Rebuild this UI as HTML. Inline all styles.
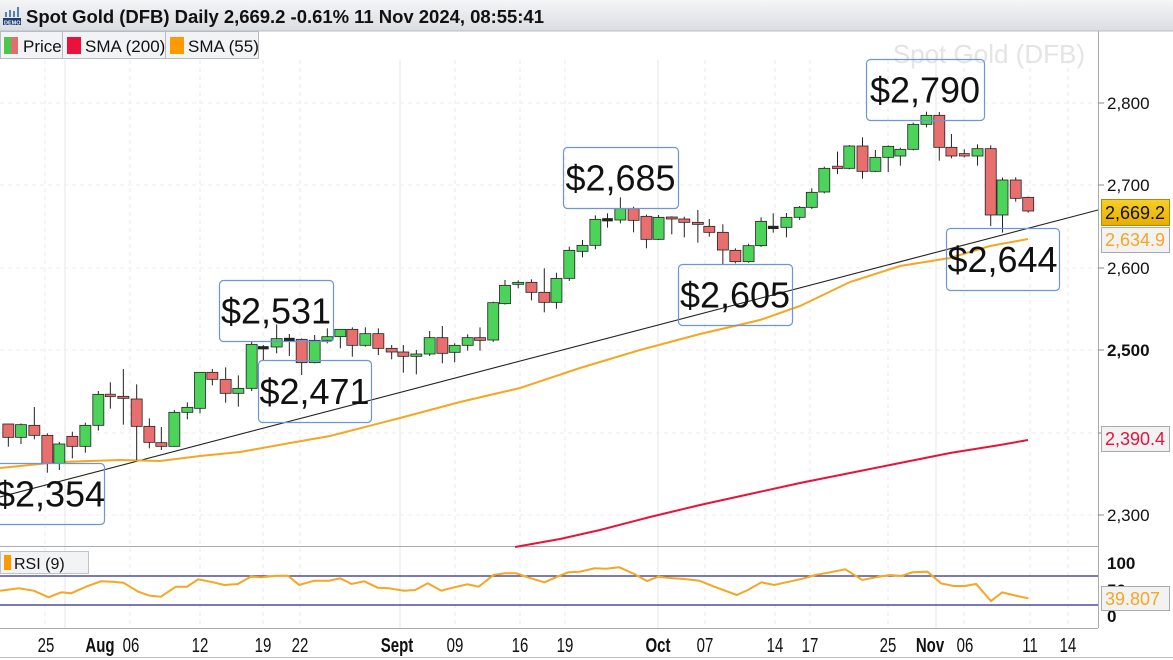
<!DOCTYPE html>
<html><head><meta charset="utf-8"><style>
html,body{margin:0;padding:0;background:#fff;}
body{width:1173px;height:660px;overflow:hidden;position:relative;font-family:"Liberation Sans",Arial,sans-serif;}
</style></head><body>
<svg id="s" width="1173" height="660" xmlns="http://www.w3.org/2000/svg" style="position:absolute;left:0;top:0;font-family:'Liberation Sans',Arial,sans-serif">
<defs><linearGradient id="hg" x1="0" y1="0" x2="0" y2="1"><stop offset="0" stop-color="#f4f5f7"/><stop offset="1" stop-color="#d9dde2"/></linearGradient>
<linearGradient id="gold" x1="0" y1="0" x2="0" y2="1"><stop offset="0" stop-color="#f7cf2a"/><stop offset="1" stop-color="#e6ad00"/></linearGradient></defs>
<rect x="0" y="0" width="1173" height="660" fill="#fff"/>
<g id="grid"></g>
<g id="lines"></g>
<g id="candles"></g>
<g id="ann"></g>
</svg>
<script>
var NS="http://www.w3.org/2000/svg",svg=document.getElementById('s');
function el(p,t,a,txt){var e=document.createElementNS(NS,t);for(var k in a)e.setAttribute(k,a[k]);if(txt!==undefined)e.textContent=txt;p.appendChild(e);return e;}
var grid=document.getElementById('grid'),lines=document.getElementById('lines'),cg=document.getElementById('candles'),ann=document.getElementById('ann');
el(grid,'rect',{x:0,y:548,width:1098,height:80,fill:'#fff'});
[45,130,200,263,300,455,520,565,705,775,810,888,964,1030,1068].forEach(function(x){el(grid,'line',{x1:x,y1:60,x2:x,y2:628,stroke:'#e8e8e8','stroke-dasharray':'4,4'});});
[65,400,658,936].forEach(function(x){el(grid,'line',{x1:x,y1:60,x2:x,y2:628,stroke:'#e6e6e6'});});
[103,185,268,350,433,515].forEach(function(y){el(grid,'line',{x1:0,y1:y,x2:1098,y2:y,stroke:'#ececec','stroke-dasharray':'4,4'});});
el(grid,'rect',{x:0,y:0,width:1173,height:31,fill:'url(#hg)'});
el(grid,'line',{x1:0,y1:31,x2:1173,y2:31,stroke:'#b8bcc2'});
var ic=el(grid,'g',{});
el(ic,'rect',{x:3,y:18,width:18,height:7,fill:'#1d3c6e'});
el(ic,'text',{x:4,y:24.5,'font-size':5.5,fill:'#fff','font-weight':'bold'},'DEMO');
[[5,12,5],[9,10,7],[13,11,6],[17,7,10]].forEach(function(b){el(ic,'rect',{x:b[0],y:b[1],width:2,height:b[2],fill:'#5a7fb8'});});
el(grid,'text',{x:26,y:23,'font-size':18.5,'font-weight':'bold',fill:'#111',textLength:518},'Spot Gold (DFB) Daily 2,669.2 -0.61% 11 Nov 2024, 08:55:41');
el(grid,'rect',{x:0.5,y:31.5,width:258,height:27,fill:'#f2f3f5',stroke:'#b8bcc2'});
el(grid,'line',{x1:62.5,y1:31,x2:62.5,y2:59,stroke:'#b8bcc2'});el(grid,'line',{x1:165.5,y1:31,x2:165.5,y2:59,stroke:'#b8bcc2'});
el(grid,'rect',{x:4,y:37,width:7,height:17,fill:'#47c94a'});el(grid,'rect',{x:11,y:37,width:7,height:17,fill:'#e46d6d'});
el(grid,'text',{x:23,y:52,'font-size':17,fill:'#111'},'Price');
el(grid,'rect',{x:67,y:37,width:14,height:17,fill:'#e8123c'});
el(grid,'text',{x:85,y:52,'font-size':17,fill:'#111'},'SMA (200)');
el(grid,'rect',{x:170,y:37,width:14,height:17,fill:'#ff9900'});
el(grid,'text',{x:188,y:52,'font-size':17,fill:'#111'},'SMA (55)');
el(grid,'text',{x:1085,y:63,'font-size':26,fill:'#e4e4e4','text-anchor':'end'},'Spot Gold (DFB)');
el(grid,'line',{x1:1098.5,y1:31,x2:1098.5,y2:628,stroke:'#a8abb0'});
el(grid,'line',{x1:0,y1:546.5,x2:1098,y2:546.5,stroke:'#a8abb0'});
el(grid,'line',{x1:0,y1:628.5,x2:1098,y2:628.5,stroke:'#a8abb0'});
el(grid,'line',{x1:0,y1:657.5,x2:1173,y2:657.5,stroke:'#c0c0c0'});
[[103,'2,800'],[185,'2,700'],[268,'2,600'],[350,'2,500'],[433,'2,400'],[515,'2,300']].forEach(function(a){el(grid,'line',{x1:1098,y1:a[0],x2:1104,y2:a[0],stroke:'#888'});el(grid,'text',{x:1107,y:a[0]+6,'font-size':17,fill:'#111','font-weight':a[1]=='2,500'?'bold':'normal'},a[1]);});
el(grid,'text',{x:1107,y:569,'font-size':17,fill:'#111','font-weight':'bold'},'100');
el(grid,'text',{x:1107,y:596,'font-size':17,fill:'#111','font-weight':'bold'},'50');
el(grid,'text',{x:1107,y:622,'font-size':17,fill:'#111','font-weight':'bold'},'0');
[[46,'25'],[100,'Aug',1],[131,'06'],[200,'12'],[263,'19'],[300,'22'],[397,'Sept',1],[455,'09'],[520,'16'],[565,'19'],[658,'Oct',1],[705,'07'],[775,'14'],[810,'17'],[888,'25'],[930,'Nov',1],[965,'06'],[1030,'11'],[1068,'14']].forEach(function(a){el(grid,'text',{x:a[0],y:652,'font-size':20,fill:'#111','text-anchor':'middle','font-weight':a[2]?'bold':'normal',transform:'translate('+a[0]+',0) scale(0.75,1) translate('+(-a[0])+',0)'},a[1]);});
el(lines,'line',{x1:0,y1:576,x2:1098,y2:576,stroke:'#2b2b8a','stroke-width':1.2});
el(lines,'line',{x1:0,y1:605,x2:1098,y2:605,stroke:'#2b2b8a','stroke-width':1.2});
var rz=[[0,152],[25,145],[45,152],[65,172],[82,157],[95,160],[115,140],[135,124],[150,125],[165,128],[185,155],[200,167],[215,170],[235,140],[250,140],[265,118],[285,127],[300,135],[318,132],[335,110],[350,112],[370,107],[385,107],[400,135],[420,122],[440,122],[455,115],[470,132],[487,124],[505,143],[520,145],[540,152],[555,150],[572,130],[590,152],[605,143],[625,133],[640,140],[660,105],[675,100],[690,100],[710,115],[728,127],[745,110],[760,97],[775,95],[795,85],[810,86],[828,82],[848,102],[865,123],[880,110],[900,115],[915,117],[935,122],[955,140],[985,165],[1000,150],[1018,127],[1035,135],[1055,125],[1075,115],[1090,105],[1110,97],[1130,88],[1153,120],[1175,110],[1190,105],[1205,108],[1220,97],[1240,95],[1258,130],[1275,138],[1290,138],[1305,132],[1325,183],[1340,157],[1360,168],[1375,175]];
var rp=rz.map(function(p){return (p[0]/1.337).toFixed(1)+','+(p[1]/3+540).toFixed(1);}).join(' ');
el(lines,'polyline',{points:rp,fill:'none',stroke:'#f5a623','stroke-width':2});
el(lines,'rect',{x:0.5,y:551.5,width:88,height:22,fill:'#f2f3f5',stroke:'#c0c4c8'});
el(lines,'rect',{x:4,y:555,width:7,height:15,fill:'#ff9900'});
el(lines,'text',{x:14,y:569,'font-size':16,fill:'#111'},'RSI (9)');
el(lines,'line',{x1:0,y1:497,x2:1098,y2:210,stroke:'#222','stroke-width':1.1});
el(lines,'polyline',{points:'0,468 60,462 120,460 160,461 200,456 240,452 290,443 330,436 400,418 460,402 520,388 580,368 640,350 700,334 760,320 800,306 850,282 900,266 950,258 990,246 1028,239',fill:'none',stroke:'#f5a623','stroke-width':2});
el(lines,'polyline',{points:'515,547 560,539 600,530 650,517 700,505 750,494 800,483 850,473 900,463 950,453 1000,445 1028,440',fill:'none',stroke:'#e8123c','stroke-width':2});
var G='#4cd35a',R='#e96f6f';
function cd(x,t,b,wt,wb,c){el(cg,'line',{x1:x,y1:wt,x2:x,y2:wb,stroke:'#222','stroke-width':1});
 if(b-t<2){el(cg,'rect',{x:x-5,y:t-0.5,width:10,height:2.5,fill:c=='k'?'#222':(c=='g'?G:R),stroke:'#222','stroke-width':0.7});}
 else el(cg,'rect',{x:x-5.5,y:t,width:11,height:b-t,fill:c=='g'?G:R,stroke:'#222','stroke-width':0.8});}
var z4=[[25,432,472,432,500,'r'],[63,434,472,430,492,'g'],[103,436,466,381,478,'r'],[142,466,550,460,578,'r'],[178,492,550,486,570,'g'],[217,469,499,455,535,'r'],[256,436,499,428,518,'g'],[295,343,436,333,452,'g'],[331,344,349,307,386,'r'],[370,349,355,267,434,'r'],[410,357,439,313,540,'r'],[448,439,487,415,505,'r'],[484,488,499,441,510,'r'],[523,397,499,390,500,'g'],[562,382,397,367,418,'g'],[600,277,385,277,400,'g'],[637,277,298,267,316,'r'],[677,298,340,262,368,'r'],[715,325,340,286,380,'g'],[755,193,325,185,333,'g'],[790,201,203,195,240,'k'],[830,176,201,133,220,'g'],[868,176,178,162,228,'k'],[905,178,248,175,285,'r'],[944,181,248,165,250,'g'],[982,170,181,145,190,'g'],[1021,148,170,148,205,'g'],[1057,148,196,142,230,'r'],[1096,161,196,142,200,'g'],[1135,161,205,145,225,'r'],[1175,205,216,195,238,'r'],[1210,216,229,195,278,'r'],[1249,222,229,210,283,'g'],[1289,173,222,153,228,'g'],[1327,173,220,138,250,'r'],[1364,196,217,190,247,'g'],[1403,173,196,163,212,'g'],[1440,173,181,142,212,'r']];
z4.forEach(function(c){cd(c[0]/3,c[1]/3+280,c[2]/3+280,c[3]/3+280,c[4]/3+280,c[5]);});
var z5=[[37,608,720,605,726,'g'],[70,556,611,540,614,'g'],[107,547,553,541,565,'g'],[144,547,577,538,601,'r'],[180,577,607,505,637,'r'],[214,535,607,518,626,'g'],[250,451,535,440,543,'g'],[287,436,454,420,472,'g'],[323,358,436,346,448,'g'],[357,357,359,340,383,'k'],[393,326,360,292,370,'g'],[430,326,361,320,397,'r'],[466,349,418,344,445,'r'],[500,352,418,345,420,'g'],[537,351,357,349,403,'r'],[572,357,367,350,412,'r'],[610,367,373,330,428,'r'],[642,379,397,357,410,'r'],[680,397,450,373,492,'r'],[715,451,485,445,490,'r'],[752,437,485,431,488,'g'],[787,364,437,352,441,'g'],[821,380,382,340,398,'k'],[858,352,382,339,412,'g'],[895,322,352,318,360,'g'],[929,277,322,265,327,'g'],[964,205,276,200,280,'g'],[1001,200,205,155,222,'r'],[1034,138,205,135,208,'g'],[1071,138,214,112,236,'r'],[1107,172,214,150,216,'g'],[1143,139,172,136,216,'g'],[1177,148,168,143,197,'g'],[1213,73,148,68,151,'g'],[1250,46,73,35,82,'g'],[1286,46,142,36,182,'r'],[1320,142,168,102,175,'r'],[1356,162,167,148,172,'r'],[1393,146,168,133,197,'g'],[1430,146,345,136,378,'r'],[1463,240,345,233,398,'g'],[1500,240,295,232,305,'r'],[1535,292,333,290,338,'r']];
z5.forEach(function(c){cd(c[0]/2.8+480,c[1]/3+100,c[2]/3+100,c[3]/3+100,c[4]/3+100,c[5]);});
[[866,59,118,61,'$2,790'],[563,147,115,61,'$2,685'],[219,280,114,61,'$2,531'],[258,360,113,62,'$2,471'],[-4,463,108,61,'$2,354'],[678,264,114,61,'$2,605'],[946,228,113,62,'$2,644']].forEach(function(a){
 el(ann,'rect',{x:a[0]+0.5,y:a[1]+0.5,width:a[2],height:a[3],rx:4,fill:'none',stroke:'#6d96d4','stroke-width':1.2});
 el(ann,'text',{x:a[0]+a[2]/2,y:a[1]+a[3]/2+13,'font-size':36,fill:'#111','text-anchor':'middle'},a[4]);});
el(ann,'rect',{x:1101.5,y:199.5,width:68,height:26,fill:'url(#gold)',stroke:'#b08a00'});
el(ann,'text',{x:1105,y:219,'font-size':18,fill:'#111'},'2,669.2');
el(ann,'rect',{x:1101.5,y:227.5,width:68,height:25,fill:'#f2f2f2',stroke:'#aaa'});
el(ann,'text',{x:1105,y:246,'font-size':18,fill:'#f5a623'},'2,634.9');
el(ann,'rect',{x:1101.5,y:426.5,width:68,height:25,fill:'#f2f2f2',stroke:'#aaa'});
el(ann,'text',{x:1105,y:445,'font-size':18,fill:'#e8123c'},'2,390.4');
el(ann,'rect',{x:1101.5,y:586.5,width:68,height:24,fill:'#f2f2f2',stroke:'#aaa'});
el(ann,'text',{x:1105,y:605,'font-size':18,fill:'#f5a623'},'39.807');
</script>
</body></html>
